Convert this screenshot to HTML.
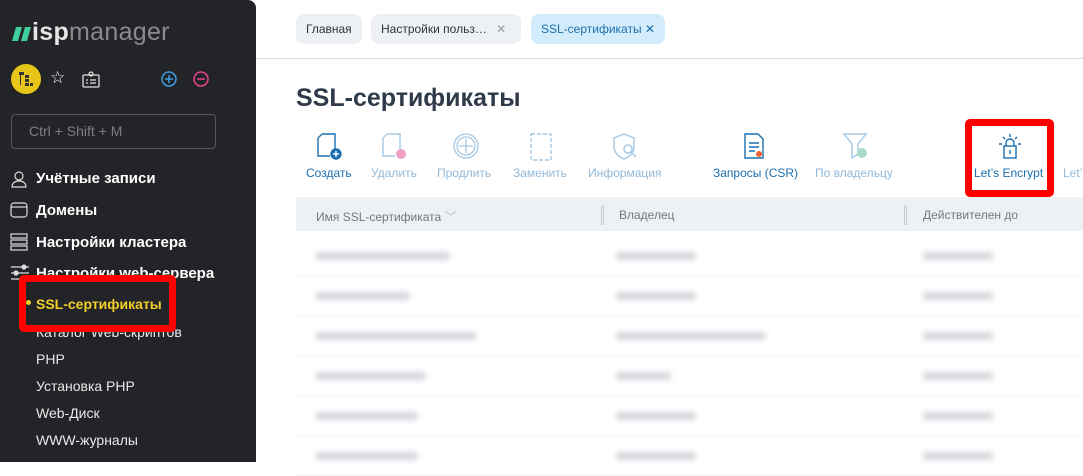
<!DOCTYPE html>
<html><head><meta charset="utf-8"><style>
*{margin:0;padding:0;box-sizing:border-box}
body{width:1083px;height:462px;overflow:hidden;background:#fff;font-family:"Liberation Sans","DejaVu Sans",sans-serif;position:relative}
.sb{position:absolute;left:0;top:0;width:256px;height:462px;background:#232428;border-top-right-radius:8px}
.abs{position:absolute}
.logo{left:12px;top:18px;font-size:25px;color:#fff;letter-spacing:0.3px}
.logo b{color:#e6e6e6}
.logo span{color:#8a8b8e}
.search{left:11px;top:114px;width:205px;height:35px;border:1px solid #55575c;border-radius:4px;color:#7d7f84;font-size:14px;padding:8px 0 0 17px}
.nav{color:#fff;font-size:15px;font-weight:bold;left:36px}
.sub{color:#e8e8e8;font-size:14px;left:36px}
.tab{top:14px;height:30px;border-radius:8px;background:#edf1f5;font-size:12px;color:#333;padding:8px 10px 0 10px}
h1{position:absolute;left:296px;top:84px;font-size:25px;color:#2f3a4a;font-weight:bold}
.tb{font-size:12px;top:166px;text-align:center}
.hdr{left:296px;top:197px;width:787px;height:34px;background:#edf1f5}
.hdr div{position:absolute;top:11px;font-size:12px;color:#777}
.row{position:absolute;left:296px;width:787px;height:40px;border-bottom:1px solid #f5f5f5}
.bl{position:absolute;top:16px;height:8px;background:#d3d6db;filter:blur(3px);border-radius:3px}
.red{border:7px solid #f00;border-radius:5px}
</style></head><body>
<div class="sb"></div>
<div class="abs logo"><svg width="20" height="14" style="vertical-align:-1px" viewBox="0 0 20 14"><path d="M4 0h6l-4 14H0z M13 0h6l-4 14H9z" fill="#3fcf9c"/></svg><b>isp</b><span>manager</span></div>
<div class="abs" style="left:11px;top:64px;width:30px;height:30px;border-radius:50%;background:#e8c619"></div>
<svg class="abs" style="left:16px;top:69px" width="20" height="20" viewBox="0 0 20 20"><g fill="#333"><rect x="3" y="3" width="5" height="3"/><rect x="9" y="6" width="4" height="3"/><rect x="9" y="10" width="4" height="3"/><rect x="9" y="14" width="4" height="3"/><rect x="14" y="14" width="3" height="3"/><rect x="4" y="6" width="1" height="10"/></g></svg>
<div class="abs" style="left:50px;top:68px;color:#fff;font-size:17px">☆</div>
<svg class="abs" style="left:82px;top:71px" width="18" height="17" viewBox="0 0 18 17" fill="none" stroke="#ddd" stroke-width="1.3"><rect x="1" y="4" width="16" height="12" rx="1"/><circle cx="9" cy="3" r="2"/><path d="M4 9h2M4 12h2M8 9h6M8 12h6"/></svg>
<svg class="abs" style="left:161px;top:71px" width="16" height="16"><circle cx="8" cy="8" r="7" fill="none" stroke="#3aa0e0" stroke-width="1.5"/><path d="M8 4v8M4 8h8" stroke="#3aa0e0" stroke-width="1.5"/></svg>
<svg class="abs" style="left:193px;top:71px" width="16" height="16"><circle cx="8" cy="8" r="7" fill="none" stroke="#e8458f" stroke-width="1.5"/><path d="M4 8h8" stroke="#e8458f" stroke-width="1.5"/></svg>
<div class="abs search">Ctrl + Shift + M</div>
<svg class="abs" style="left:10px;top:170px" width="18" height="18" fill="none" stroke="#ddd" stroke-width="1.2"><circle cx="9" cy="6" r="4"/><path d="M2 17c0-4 3-6 7-6s7 2 7 6z"/></svg>
<div class="abs nav" style="top:170px">Учётные записи</div>
<svg class="abs" style="left:10px;top:202px" width="18" height="16" fill="none" stroke="#ddd" stroke-width="1.2"><rect x="1" y="1" width="16" height="14" rx="3"/><path d="M1 5h16"/></svg>
<div class="abs nav" style="top:202px">Домены</div>
<svg class="abs" style="left:10px;top:233px" width="18" height="18" fill="none" stroke="#ddd" stroke-width="1.2"><rect x="1" y="1" width="16" height="4"/><rect x="1" y="7" width="16" height="4"/><rect x="1" y="13" width="16" height="4"/></svg>
<div class="abs nav" style="top:234px">Настройки кластера</div>
<svg class="abs" style="left:10px;top:264px" width="20" height="18" stroke="#ddd" stroke-width="1.2"><path d="M1 3h18M1 9h18M1 15h18"/><circle cx="14" cy="3" r="2" fill="#ddd"/><circle cx="6" cy="9" r="2" fill="#ddd"/></svg>
<div class="abs nav" style="top:265px">Настройки web-сервера</div>
<div class="abs" style="left:26px;top:300px;width:5px;height:5px;border-radius:50%;background:#f2d028"></div>
<div class="abs sub" style="top:324px">Каталог Web-скриптов</div>
<div class="abs red" style="left:19px;top:275px;width:157px;height:57px"></div>
<div class="abs nav" style="top:296px;color:#f2d028;font-size:14px">SSL-сертификаты</div>
<div class="abs sub" style="top:351px">PHP</div>
<div class="abs sub" style="top:378px">Установка PHP</div>
<div class="abs sub" style="top:405px">Web-Диск</div>
<div class="abs sub" style="top:432px">WWW-журналы</div>

<div class="abs" style="left:256px;top:58px;width:827px;height:1px;background:#ddd"></div>
<div class="abs tab" style="left:296px">Главная</div>
<div class="abs tab" style="left:371px;width:150px">Настройки польз… <span style="color:#999;margin-left:6px">✕</span></div>
<div class="abs tab" style="left:531px;background:#d2ecfb;color:#1f6fa8">SSL-сертификаты <span>✕</span></div>
<h1>SSL-сертификаты</h1>

<svg class="abs" style="left:317px;top:133px" width="26" height="28" fill="none" stroke="#1a6fb0" stroke-width="1.4"><path d="M5 1h13v17M5 1L1 5v18h12"/><circle cx="19" cy="21" r="5" fill="#1a6fb0"/><path d="M19 18v6M16 21h6" stroke="#fff"/></svg>
<div class="abs tb" style="left:306px;color:#1a6fb0">Создать</div>
<svg class="abs" style="left:382px;top:133px" width="26" height="28" fill="none" stroke="#a5c8e4" stroke-width="1.4"><path d="M5 1h13v17M5 1L1 5v18h12"/><circle cx="19" cy="21" r="5" fill="#f0a0c0" stroke="none"/></svg>
<div class="abs tb" style="left:371px;color:#93b9d8">Удалить</div>
<svg class="abs" style="left:453px;top:133px" width="26" height="26" fill="none" stroke="#a5c8e4" stroke-width="1.3"><circle cx="13" cy="13" r="12"/><circle cx="13" cy="13" r="9"/><path d="M13 6v14M6 13h14"/></svg>
<div class="abs tb" style="left:437px;color:#93b9d8">Продлить</div>
<svg class="abs" style="left:530px;top:133px" width="22" height="28" fill="none" stroke="#a5c8e4" stroke-width="1.4" stroke-dasharray="4 2"><rect x="1" y="1" width="20" height="26"/></svg>
<div class="abs tb" style="left:513px;color:#93b9d8">Заменить</div>
<svg class="abs" style="left:613px;top:133px" width="26" height="28" fill="none" stroke="#a5c8e4" stroke-width="1.4"><path d="M11 1l10 4v8c0 7-5 11-10 13C6 24 1 20 1 13V5z"/><circle cx="15" cy="16" r="4"/><path d="M18 19l5 5"/></svg>
<div class="abs tb" style="left:588px;color:#93b9d8">Информация</div>
<svg class="abs" style="left:744px;top:133px" width="20" height="26" fill="none" stroke="#1a6fb0" stroke-width="1.4"><path d="M1 1h13l5 5v19H1z"/><path d="M5 10h10M5 14h10M5 18h6"/><circle cx="15" cy="21" r="3" fill="#f06030" stroke="none"/></svg>
<div class="abs tb" style="left:713px;color:#1a6fb0">Запросы (CSR)</div>
<svg class="abs" style="left:843px;top:133px" width="26" height="28" fill="none" stroke="#a5c8e4" stroke-width="1.4"><path d="M1 1h22l-8 10v10l-6 4V11z"/><circle cx="19" cy="20" r="5" fill="#a8dcc8" stroke="none"/></svg>
<div class="abs tb" style="left:815px;color:#93b9d8">По владельцу</div>
<div class="abs red" style="left:965px;top:119px;width:89px;height:78px"></div>
<svg class="abs" style="left:998px;top:134px" width="24" height="26" fill="none" stroke="#1a6fb0" stroke-width="1.4"><path d="M12 0v3M5 3l2 2M19 3l-2 2M1 10h3M20 10h3"/><rect x="6" y="12" width="12" height="12"/><path d="M8 12V9a4 4 0 018 0v3M12 16v4"/></svg>
<div class="abs tb" style="left:974px;color:#1a6fb0">Let’s Encrypt</div>
<div class="abs tb" style="left:1063px;color:#93b9d8">Let’</div>

<div class="abs hdr"><div style="left:20px">Имя SSL-сертификата <span style="color:#bbb">﹀</span></div><div style="left:323px">Владелец</div><div style="left:627px">Действителен до</div>
<span style="position:absolute;left:305px;top:8px;width:3px;height:20px;border-left:1px solid #ccc;border-right:1px solid #ccc"></span>
<span style="position:absolute;left:608px;top:8px;width:3px;height:20px;border-left:1px solid #ccc;border-right:1px solid #ccc"></span></div>

<div class="row" style="top:236px"><div class="bl" style="left:20px;width:134px"></div><div class="bl" style="left:320px;width:80px"></div><div class="bl" style="left:627px;width:70px"></div></div>
<div class="row" style="top:276px"><div class="bl" style="left:20px;width:94px"></div><div class="bl" style="left:320px;width:80px"></div><div class="bl" style="left:627px;width:70px"></div></div>
<div class="row" style="top:316px"><div class="bl" style="left:20px;width:160px"></div><div class="bl" style="left:320px;width:150px"></div><div class="bl" style="left:627px;width:70px"></div></div>
<div class="row" style="top:356px"><div class="bl" style="left:20px;width:110px"></div><div class="bl" style="left:320px;width:55px"></div><div class="bl" style="left:627px;width:70px"></div></div>
<div class="row" style="top:396px"><div class="bl" style="left:20px;width:102px"></div><div class="bl" style="left:320px;width:80px"></div><div class="bl" style="left:627px;width:70px"></div></div>
<div class="row" style="top:436px"><div class="bl" style="left:20px;width:102px"></div><div class="bl" style="left:320px;width:80px"></div><div class="bl" style="left:627px;width:70px"></div></div>
</body></html>
